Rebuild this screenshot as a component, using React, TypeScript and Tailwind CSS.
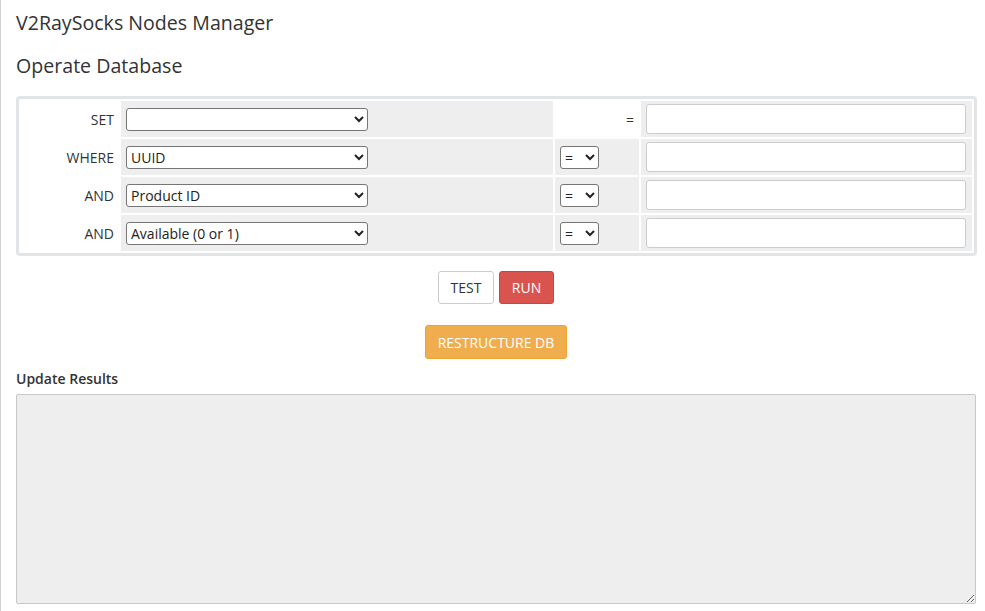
import React from "react";

const fieldOptions = ["", "UUID", "Product ID", "Available (0 or 1)", "Service ID", "Node ID"];

function FieldSelect({ value }: { value: string }) {
  return (
    <select
      defaultValue={value}
      className="h-[23px] w-[242px] rounded-[3px] border border-[#767676] bg-white pl-0 text-[14px] text-[#222] outline-none"
    >
      {fieldOptions.map((o) => (
        <option key={o} value={o}>
          {o}
        </option>
      ))}
    </select>
  );
}

function OpSelect() {
  return (
    <select
      defaultValue="="
      className="h-[23px] w-[39px] rounded-[3px] border border-[#767676] bg-white pl-0 text-[14px] text-[#222] outline-none"
    >
      <option value="=">=</option>
      <option value="!=">!=</option>
      <option value=">">&gt;</option>
      <option value="<">&lt;</option>
    </select>
  );
}

function TextField() {
  return (
    <input
      type="text"
      className="h-[30px] w-full rounded-[3px] border border-[#ccc] bg-white px-2 text-[14px] outline-none"
    />
  );
}

type Row = { label: string; field: string; op: boolean };

const rows: Row[] = [
  { label: "SET", field: "", op: false },
  { label: "WHERE", field: "UUID", op: true },
  { label: "AND", field: "Product ID", op: true },
  { label: "AND", field: "Available (0 or 1)", op: true },
];

export default function App() {
  return (
    <div
      className="min-h-[611px] border-l border-[#d0d0d0] bg-white pl-[15px] pr-[8px] text-[#333]"
      style={{ fontFamily: '"Open Sans", "Liberation Sans", sans-serif' }}
    >
      <h2 className="pt-[12px] text-[19.6px] leading-[22px] font-normal">V2RaySocks Nodes Manager</h2>
      <h3 className="mt-[21px] text-[19.6px] leading-[22px] font-normal">Operate Database</h3>

      <div className="mt-[19px] w-[961px] rounded-[4px] border-[3px] border-[#e1e5e8] p-[2px]">
        <div className="grid grid-cols-[98px_432px_84px_1fr] gap-[2px]">
          {rows.map((r, i) => (
            <React.Fragment key={i}>
              <div className="flex h-[36px] items-center justify-end pr-[5px] text-[14px]">{r.label}</div>
              <div className="flex h-[36px] items-center bg-[#eee] pl-[5px]">
                <FieldSelect value={r.field} />
              </div>
              {r.op ? (
                <div className="flex h-[36px] items-center bg-[#eee] pl-[5px]">
                  <OpSelect />
                </div>
              ) : (
                <div className="flex h-[36px] items-center justify-end pr-[5px] text-[14px]">=</div>
              )}
              <div className="flex h-[36px] items-center bg-[#eee] pl-[5px] pr-[6px]">
                <TextField />
              </div>
            </React.Fragment>
          ))}
        </div>
      </div>

      <div className="flex w-[960px] flex-col items-center">
        <div className="mt-[15px] flex gap-[5px]">
          <button className="h-[33px] w-[56px] rounded-[3px] border border-[#ccc] bg-white text-[14px] text-[#333]">
            TEST
          </button>
          <button className="h-[33px] w-[55px] rounded-[3px] border border-[#d43f3a] bg-[#d9534f] text-[14px] text-white">
            RUN
          </button>
        </div>
        <button className="mt-[21px] h-[34px] w-[142px] rounded-[3px] border border-[#eea236] bg-[#f0ad4e] text-[14px] text-white">
          RESTRUCTURE DB
        </button>
      </div>

      <div className="mt-[10px] text-[14px] leading-[20px] font-semibold">Update Results</div>
      <textarea
        readOnly
        className="mt-[5px] block h-[210px] w-[960px] rounded-[2px] border border-[#c8c8c8] bg-[#eee] outline-none"
      />
    </div>
  );
}
